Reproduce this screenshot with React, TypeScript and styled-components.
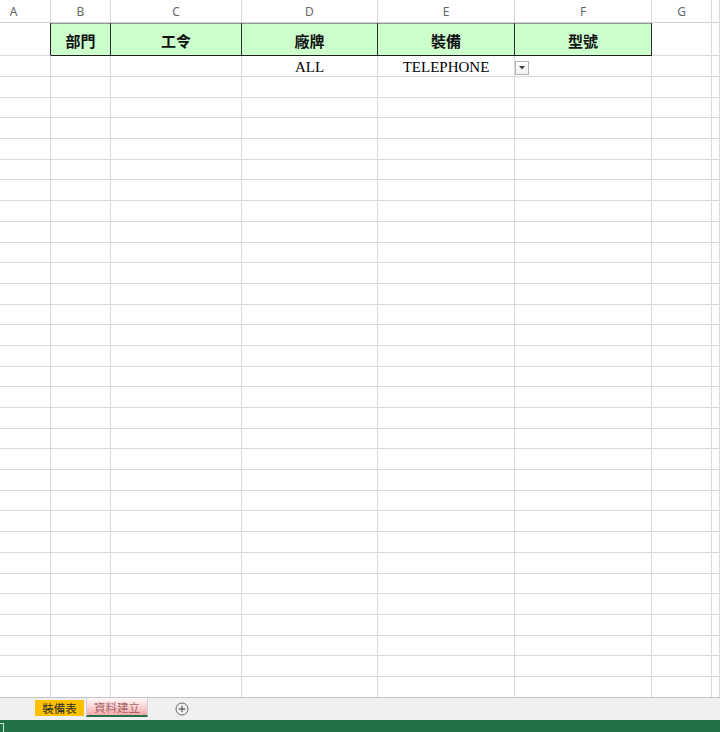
import React from 'react';
import styled, { createGlobalStyle } from 'styled-components';

const GlobalStyle = createGlobalStyle`
  html, body { margin: 0; padding: 0; background: #fff; overflow: hidden; }
  #root { width: 720px; height: 732px; }
`;

const Page = styled.div`
  width: 720px;
  height: 732px;
  display: flex;
  flex-direction: column;
  overflow: hidden;
  font-family: "Noto Sans", "Noto Sans CJK TC", sans-serif;
`;

const SheetGrid = styled.div`
  flex: 1;
  min-height: 0;
  overflow: hidden;
  display: grid;
  grid-template-columns: 51px 60px 131px 136px 137px 137px 60px 1fr;
  grid-template-rows: 23px 33px 21px;
  grid-auto-rows: 20.69px;
`;

const GRID = '#d9d9d9';

const ColHeader = styled.div<{ $shiftLeft?: boolean }>`
  box-sizing: border-box;
  border-right: 1px solid ${GRID};
  border-bottom: 1px solid #cfcfcf;
  display: flex;
  align-items: center;
  justify-content: center;
  padding-right: ${p => (p.$shiftLeft ? '23px' : '0')};
  font-family: "Noto Sans", "Liberation Sans", sans-serif;
  font-size: 12px;
  color: #666;
  background: #fff;
`;

const Cell = styled.div<{ $right?: string; $bottom?: string }>`
  box-sizing: border-box;
  position: relative;
  border-right: 1px solid ${p => p.$right ?? GRID};
  border-bottom: 1px solid ${p => p.$bottom ?? GRID};
  background: #fff;
`;

const TitleCell = styled.div`
  box-sizing: border-box;
  border-right: 1px solid #2b2b2b;
  border-bottom: 1px solid #1f1f1f;
  box-shadow: inset 0 1px 0 #8e9e8e;
  background: #ccffcc;
  display: flex;
  align-items: center;
  justify-content: center;
  padding-top: 2px;
  font-family: "Noto Sans CJK TC", "Noto Sans", sans-serif;
  font-weight: 700;
  font-size: 15px;
  color: #111;
`;

const DataCell = styled(Cell)`
  display: flex;
  align-items: flex-end;
  justify-content: center;
  font-family: "Liberation Serif", serif;
  font-size: 15px;
  line-height: 18px;
  color: #000;
`;

const DropButton = styled.div`
  position: absolute;
  left: 0;
  top: 5px;
  width: 14px;
  height: 14px;
  box-sizing: border-box;
  border: 1px solid #b4b4b4;
  background: linear-gradient(#ffffff, #f1f1f1);
  display: flex;
  align-items: center;
  justify-content: center;
`;

const TabBar = styled.div`
  height: 23px;
  flex: none;
  box-sizing: border-box;
  border-top: 1px solid #c3c3c3;
  background: #f0f0f0;
  display: flex;
  align-items: flex-start;
  padding-left: 35px;
`;

const YellowTab = styled.div`
  margin-top: 2px;
  width: 49px;
  height: 16px;
  background: #ffc000;
  display: flex;
  align-items: center;
  justify-content: center;
  font-family: "Noto Sans CJK TC", sans-serif;
  font-size: 11.5px;
  color: #2a2a2a;
`;

const PinkTab = styled.div`
  margin-left: 2px;
  width: 62px;
  height: 19px;
  box-sizing: border-box;
  border-left: 1px solid #cfcfcf;
  border-right: 1px solid #cfcfcf;
  border-bottom: 2px solid #217346;
  background: linear-gradient(#fff8f8 0%, #fbd9d9 45%, #f3a9a9 100%);
  display: flex;
  align-items: center;
  justify-content: center;
  font-family: "Noto Sans CJK TC", sans-serif;
  font-size: 11.5px;
  color: #a96464;
`;

const AddSheet = styled.div`
  margin-left: 27px;
  margin-top: 4px;
  width: 14px;
  height: 14px;
  display: flex;
`;

const StatusBar = styled.div`
  height: 12px;
  flex: none;
  background: #217346;
  display: flex;
  align-items: flex-end;
`;

const StatusIcon = styled.div`
  width: 3px;
  height: 8px;
  margin-bottom: 0;
  border: 1px solid #cfe3d6;
  border-left: none;
  border-bottom: none;
`;

const COLS = ['A', 'B', 'C', 'D', 'E', 'F', 'G', ''];
const TITLES = ['部門', '工令', '廠牌', '裝備', '型號'];
const EMPTY_ROWS = 31;

export default function App() {
  return (
    <>
      <GlobalStyle />
      <Page>
        <SheetGrid>
          {COLS.map((c, i) => (
            <ColHeader key={`h${i}`} $shiftLeft={i === 0}>{c}</ColHeader>
          ))}

          <Cell $right="#222" />
          {TITLES.map(t => (
            <TitleCell key={t}>{t}</TitleCell>
          ))}
          <Cell />
          <Cell />

          <Cell />
          <Cell />
          <Cell />
          <DataCell>ALL</DataCell>
          <DataCell>TELEPHONE</DataCell>
          <Cell>
            <DropButton>
              <svg width="6" height="4" viewBox="0 0 6 4">
                <path d="M0 0 L6 0 L3 3.5 Z" fill="#444" />
              </svg>
            </DropButton>
          </Cell>
          <Cell />
          <Cell />

          {Array.from({ length: EMPTY_ROWS }).map((_, r) =>
            COLS.map((_, c) => <Cell key={`r${r}c${c}`} />)
          )}
        </SheetGrid>

        <TabBar>
          <YellowTab>裝備表</YellowTab>
          <PinkTab>資料建立</PinkTab>
          <AddSheet>
            <svg width="14" height="14" viewBox="0 0 14 14">
              <circle cx="7" cy="7" r="6" fill="none" stroke="#6a6a6a" strokeWidth="1" />
              <path d="M7 3.8 V10.2 M3.8 7 H10.2" stroke="#6a6a6a" strokeWidth="1.3" />
            </svg>
          </AddSheet>
        </TabBar>

        <StatusBar>
          <StatusIcon />
        </StatusBar>
      </Page>
    </>
  );
}
